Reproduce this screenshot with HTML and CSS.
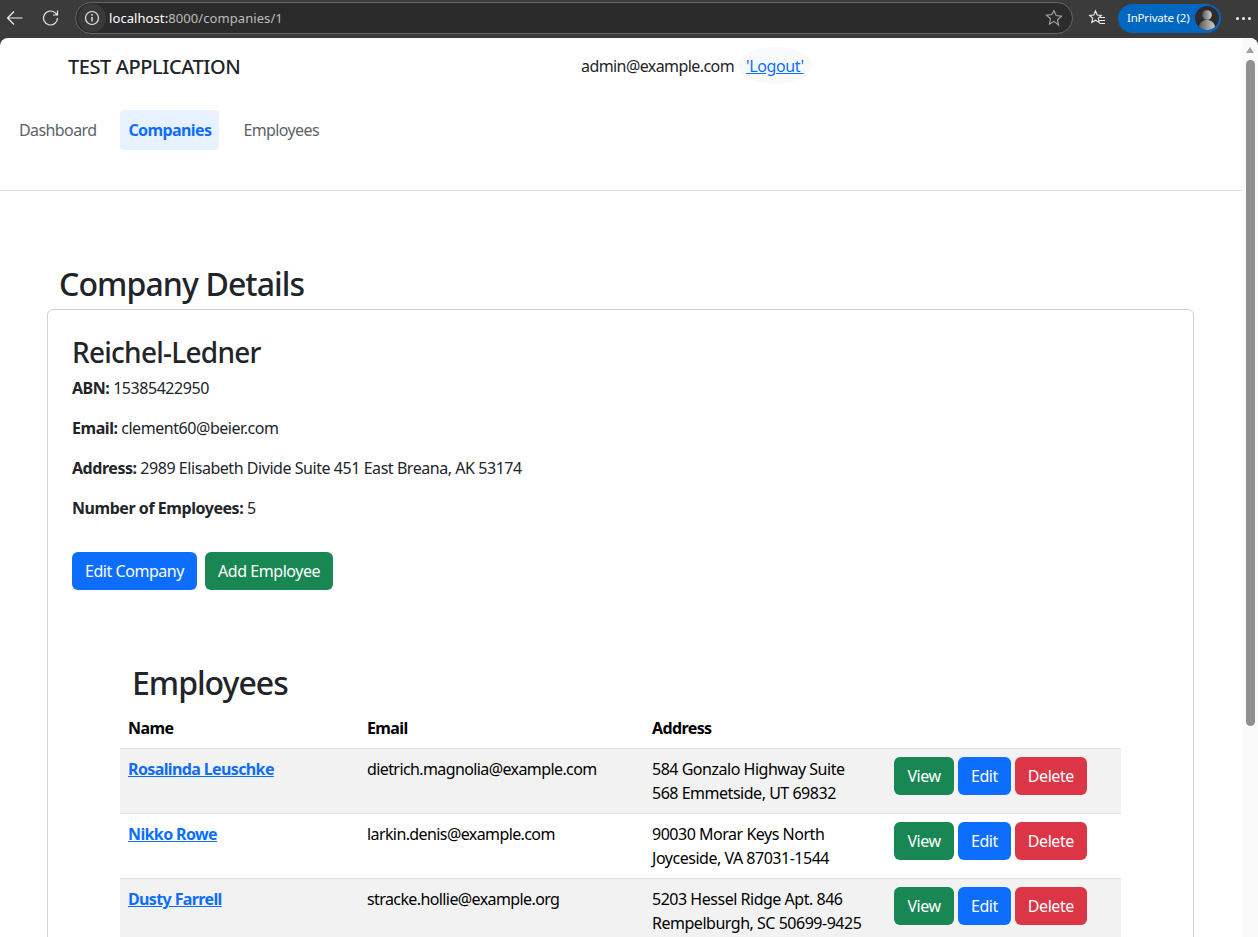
FILE: index.html
```html
<!DOCTYPE html>
<html lang="en">
<head>
<meta charset="utf-8">
<title>Company Details</title>
<link rel="stylesheet" href="styles.css">
</head>
<body>
<div class="browser">
  <div class="toolbar">
    <svg class="tb-back" width="18" height="16" viewBox="0 0 18 16"><path d="M16.5 8H1.500M8 1.500L1.500 8L8 14.500" fill="none" stroke="#f0f0f0" stroke-width="1.2"/></svg>
    <svg class="tb-reload" width="18" height="18" viewBox="0 0 18 18"><path d="M15.500 9a7 7 0 1 1-2.200-5.100L15.500 6M15.500 1.500V6H11" fill="none" stroke="#e8e8e8" stroke-width="1.2"/></svg>
    <div class="omnibox">
      <span class="info-wrap"><svg width="16" height="16" viewBox="0 0 16 16"><circle cx="8" cy="8" r="6.500" fill="none" stroke="#e8e8e8" stroke-width="1.2"/><path d="M8 7v4.500" stroke="#e8e8e8" stroke-width="1.4"/><circle cx="8" cy="4.800" r="0.900" fill="#e8e8e8"/></svg></span>
      <span class="url"><span class="url-host">localhost:</span>8000/companies/1</span>
      <svg class="star" width="18" height="18" viewBox="0 0 18 18"><path d="M9 1.700l2.200 4.900 5.300.6-4 3.600 1.100 5.300L9 12.400l-4.600 2.700 1.100-5.300-4-3.600 5.300-.6z" fill="none" stroke="#a8a8a8" stroke-width="1.1"/></svg>
    </div>
    <svg class="favs" width="18" height="18" viewBox="0 0 18 18"><path d="M7.500 2l1.700 4 4.100.4-3 2.800.9 4.200-3.700-2.200-3.700 2.200.9-4.200-3-2.800 4.100-.4z" fill="none" stroke="#f0f0f0" stroke-width="1.1"/><path d="M12 8.500h5M11.500 11.500h5.500M11.500 14.500h5.500" stroke="#f0f0f0" stroke-width="1"/></svg>
    <div class="profile">
      <span class="profile-label">InPrivate (2)</span>
      <svg class="avatar" width="24" height="24" viewBox="0 0 24 24"><defs><linearGradient id="av" x1="0" x2="1" y1="0" y2="0"><stop offset="0" stop-color="#5a5a5a"/><stop offset="1" stop-color="#d0d0d0"/></linearGradient></defs><circle cx="12" cy="12" r="12" fill="#2f2b2a"/><circle cx="12" cy="9" r="4.800" fill="url(#av)"/><path d="M4 21c1-5 4-7 8-7s7 2 8 7a12 12 0 0 1-16 0z" fill="url(#av)"/></svg>
    </div>
    <span class="more"><i></i><i></i><i></i></span>
  </div>

  <div class="viewport">
    <div class="page">
      <header class="site-header">
        <div class="topline">
          <span class="brand">TEST APPLICATION</span>
          <div class="user">
            <span class="user-email">admin@example.com</span>
            <a class="logout" href="#">'Logout'</a>
          </div>
        </div>
        <nav class="nav">
          <a class="nav-link" href="#">Dashboard</a>
          <a class="nav-link active" href="#">Companies</a>
          <a class="nav-link" href="#">Employees</a>
        </nav>
      </header>

      <main class="main">
        <h1 class="title">Company Details</h1>
        <section class="card">
          <h2 class="company">Reichel-Ledner</h2>
          <p class="field"><strong>ABN:</strong> 15385422950</p>
          <p class="field"><strong>Email:</strong> clement60@beier.com</p>
          <p class="field"><strong>Address:</strong> 2989 Elisabeth Divide Suite 451 East Breana, AK 53174</p>
          <p class="field"><strong>Number of Employees:</strong> 5</p>
          <div class="actions">
            <a class="btn blue" href="#">Edit Company</a>
            <a class="btn green" href="#">Add Employee</a>
          </div>
          <div class="employees">
            <h2 class="emp-title">Employees</h2>
            <table class="table">
              <colgroup><col class="c1"><col class="c2"><col class="c3"><col class="c4"></colgroup>
              <thead>
                <tr><th>Name</th><th>Email</th><th>Address</th><th></th></tr>
              </thead>
              <tbody>
                <tr class="odd">
                  <td><a class="emp-link" href="#">Rosalinda Leuschke</a></td>
                  <td class="emp-email">dietrich.magnolia@example.com</td>
                  <td>584 Gonzalo Highway Suite<br>568 Emmetside, UT 69832</td>
                  <td><div class="row-btns"><a class="btn green" href="#">View</a><a class="btn blue" href="#">Edit</a><a class="btn red" href="#">Delete</a></div></td>
                </tr>
                <tr>
                  <td><a class="emp-link" href="#">Nikko Rowe</a></td>
                  <td class="emp-email">larkin.denis@example.com</td>
                  <td>90030 Morar Keys North<br>Joyceside, VA 87031-1544</td>
                  <td><div class="row-btns"><a class="btn green" href="#">View</a><a class="btn blue" href="#">Edit</a><a class="btn red" href="#">Delete</a></div></td>
                </tr>
                <tr class="odd">
                  <td><a class="emp-link" href="#">Dusty Farrell</a></td>
                  <td class="emp-email">stracke.hollie@example.org</td>
                  <td>5203 Hessel Ridge Apt. 846<br>Rempelburgh, SC 50699-9425</td>
                  <td><div class="row-btns"><a class="btn green" href="#">View</a><a class="btn blue" href="#">Edit</a><a class="btn red" href="#">Delete</a></div></td>
                </tr>
              </tbody>
            </table>
          </div>
        </section>
      </main>
    </div>
    <div class="scrollbar">
      <span class="sb-arrow"></span>
      <span class="sb-thumb"></span>
    </div>
  </div>
</div>
</body>
</html>
```
FILE: styles.css
```css
* { box-sizing: border-box; }
html, body { margin: 0; height: 100%; overflow: hidden; }
body {
  font-family: "Noto Sans", "Open Sans", "Liberation Sans", sans-serif;
  font-size: 16px;
  line-height: 24px;
  color: #212529;
  background: #3b3b3b;
}
.browser { height: 937px; display: flex; flex-direction: column; }

/* Browser toolbar */
.toolbar { height: 38px; flex: none; display: flex; align-items: center; background: #3b3b3b; padding: 0 0 2px 6px; }
.tb-back { margin-right: 18px; }
.tb-reload { margin-right: 15px; }
.omnibox {
  width: 998px; height: 32px; flex: none; display: flex; align-items: center;
  background: #2b2b2b; border: 1px solid #666; border-radius: 16px; padding-left: 2px;
}
.info-wrap { width: 28px; height: 28px; border-radius: 50%; background: #3a3a3a; display: flex; align-items: center; justify-content: center; }
.url { margin-left: 3px; font-size: 13px; color: #bdbdbd; letter-spacing: 0.08px; flex: 1; }
.url-host { color: #fff; }
.star { margin-right: 9px; }
.favs { margin-left: 15px; }
.profile {
  margin-left: 12px; width: 103px; height: 29px; flex: none; display: flex; align-items: center;
  justify-content: space-between; background: #0067c0; border-radius: 15px; padding: 0 2px 0 9px;
}
.profile-label { font-size: 11.5px; color: #fff; letter-spacing: -0.2px; white-space: nowrap; }
.more { margin-left: 15px; display: flex; gap: 3px; }
.more i { width: 3px; height: 3px; border-radius: 50%; background: #f0f0f0; }

/* Page */
.viewport { flex: 1; min-height: 0; display: flex; background: #fff; border-radius: 8px 8px 0 0; overflow: hidden; }
.page { width: 1242px; flex: none; }
.scrollbar { flex: 1; background: #fafafa; display: flex; flex-direction: column; align-items: center; padding-top: 9px; gap: 7px; }
.sb-arrow { width: 0; height: 0; border-left: 4.5px solid transparent; border-right: 4.5px solid transparent; border-bottom: 6px solid #a0a0a0; }
.sb-thumb { width: 9px; height: 666px; background: #8f8f8f; border-radius: 5px; }

/* Header */
.site-header { height: 153px; border-bottom: 1px solid #dee2e6; }
.topline { height: 58px; display: flex; align-items: center; padding-left: 68px; }
.brand { font-size: 20px; font-weight: 500; width: 513px; letter-spacing: -0.42px; }
.user { display: flex; align-items: center; margin-bottom: 3px; }
.user-email { padding-top: 1px; letter-spacing: -0.58px; }
.logout {
  margin-left: 4px; padding: 7px 8px 6px; color: #0d6efd; background: #f8f9fa; border-radius: 50%;
  text-decoration: underline; letter-spacing: -0.4px;
}
.nav { display: flex; gap: 16px; padding: 14px 0 0 11px; }
.nav-link { height: 40px; padding: 8px; border-radius: 4px; color: #5c636a; text-decoration: none; letter-spacing: -0.6px; }
.nav-link.active { color: #0d6efd; font-weight: 700; background: #e7f1ff; letter-spacing: -0.6px; }

/* Main */
.main { padding: 70px 48px 0 47px; }
.title { margin: 0 0 0 12px; height: 48px; padding-bottom: 2px; font-size: 32px; line-height: 46px; font-weight: 500; letter-spacing: -0.9px; }
.card { border: 1px solid #ced4da; border-radius: 6px; padding: 24px 24px 24px; height: 700px; }
.company { margin: 0 0 6px; font-size: 28px; line-height: 36px; font-weight: 500; letter-spacing: -0.75px; }
.field { margin: 0 0 16px; letter-spacing: -0.45px; }
.field strong { font-weight: 700; }
.actions { display: flex; gap: 8px; margin-top: 32px; }
.btn { display: block; height: 38px; padding: 7px 13px; border-radius: 6px; color: #fff; text-decoration: none; letter-spacing: -0.45px; white-space: nowrap; }
.blue { background: #0d6efd; }
.green { background: #198754; }
.red { background: #dc3545; }

/* Employees */
.employees { margin: 70px 0 0 48px; }
.emp-title { margin: 0 0 0 12px; height: 48px; padding-bottom: 2px; font-size: 32px; line-height: 46px; font-weight: 500; letter-spacing: -1px; }
.table { width: 1001px; border-collapse: separate; border-spacing: 0; table-layout: fixed; color: #000; }
.c1 { width: 239px; }
.c2 { width: 285px; }
.c3 { width: 242px; }
.c4 { width: 235px; }
th { text-align: left; vertical-align: top; font-weight: 700; padding: 8px 8px 8px; height: 41px; border-bottom: 1px solid #dee2e6; letter-spacing: -0.6px; }
td { vertical-align: top; padding: 8px; height: 65px; border-bottom: 1px solid #dee2e6; letter-spacing: -0.48px; }
.emp-email { letter-spacing: -0.6px; }
.odd td { background: #f2f2f2; }
.emp-link { color: #0d6efd; font-weight: 700; letter-spacing: -0.62px; }
.row-btns { display: flex; gap: 4px; }
.row-btns .green { min-width: 60px; text-align: center; }
```
